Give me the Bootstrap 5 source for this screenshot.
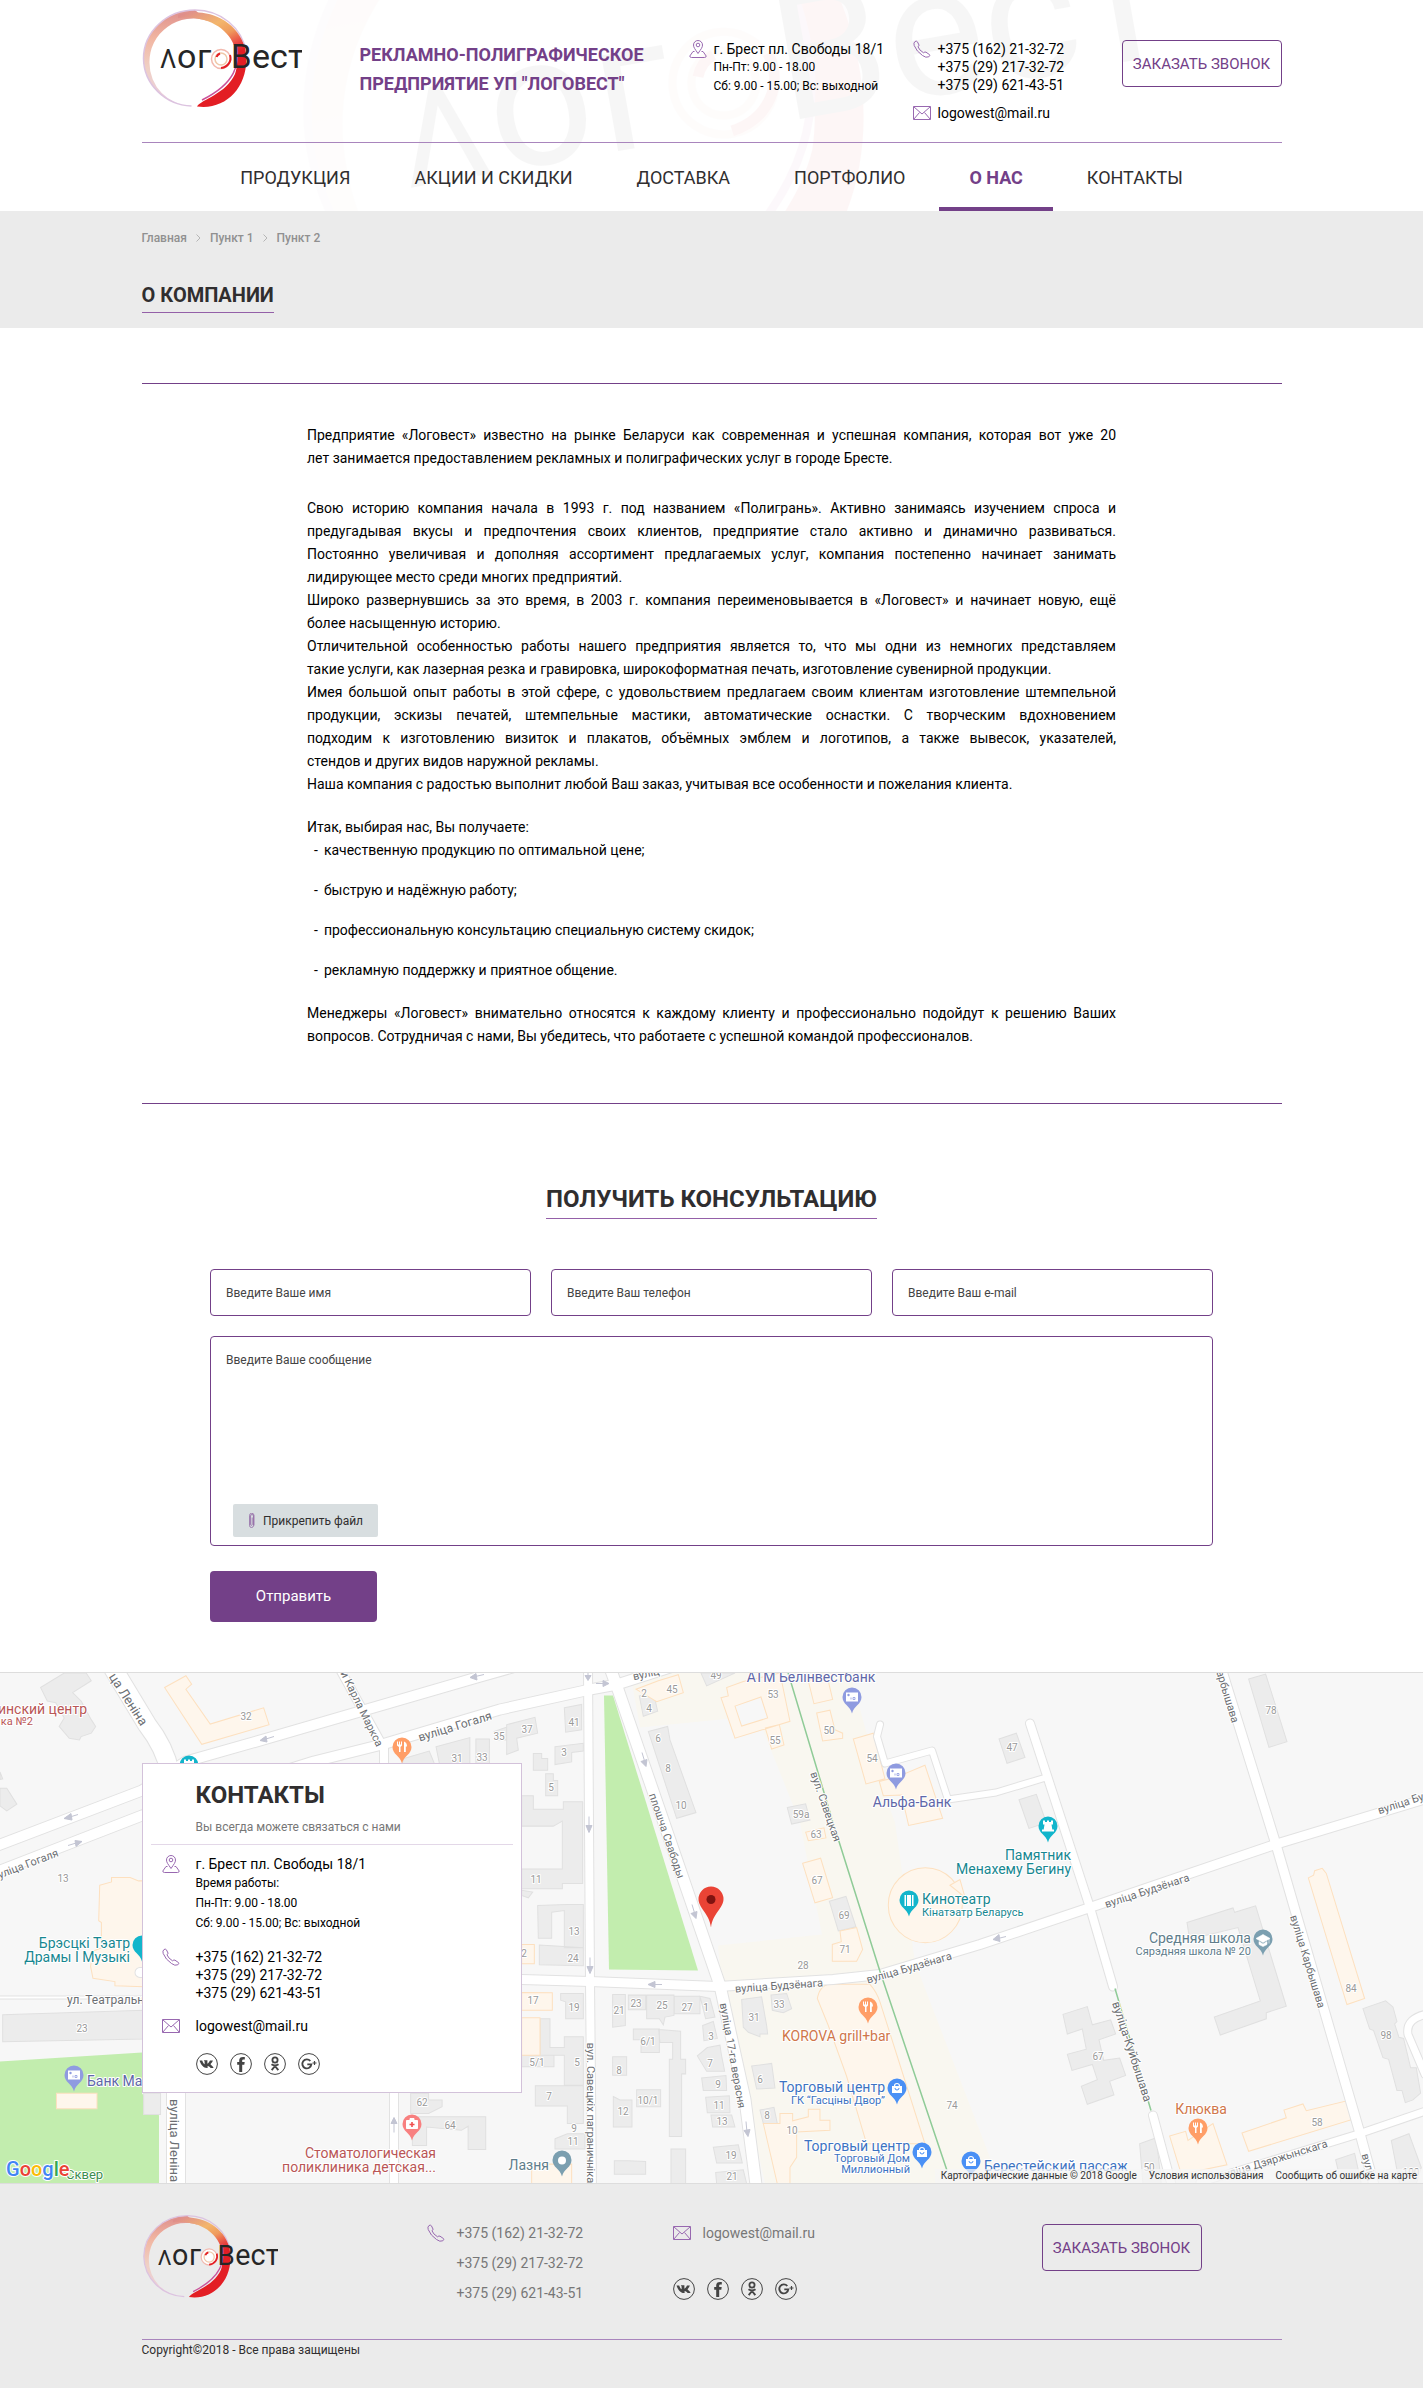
<!DOCTYPE html>
<html lang="ru">
<head>
<meta charset="utf-8">
<meta name="viewport" content="width=device-width, initial-scale=1">
<title>О компании - Логовест</title>
<link href="https://cdn.jsdelivr.net/npm/bootstrap@5.3.0/dist/css/bootstrap.min.css" rel="stylesheet">
<style>
:root{--brand:#734088;--brand-soft:#a985bd;--ink:#302e2f}
body{font-family:Roboto,"Liberation Sans",sans-serif;font-size:14px;line-height:18px;color:#000;background:#fff}
a{color:inherit;text-decoration:none}
.wrap{max-width:1170px;margin:0 auto;padding:0 15px}
.site-header{position:relative;overflow:hidden}
.watermark{position:absolute;inset:0;width:100%;height:100%;opacity:.035;pointer-events:none}
.header-top{border-bottom:1px solid var(--brand-soft);min-height:143px}
.col-brand{flex:0 0 218px;padding-top:8px}
.col-title{flex:0 0 329px;padding-top:40px;font-size:18px;line-height:29px;font-weight:700;color:var(--brand)}
.col-address{flex:0 0 224px;padding-top:40px}
.col-phones{flex:1 1 200px;padding-top:40px}
.icon-cell{flex:0 0 25px}
.icon-cell svg{display:block;width:18px;height:18px;fill:none;stroke:#9868b0;stroke-width:1}
.hours{font-size:12px;line-height:19px}
.phones-row{margin-bottom:10px}
.btn-call{width:160px;height:47px;padding:0;border:1px solid var(--brand);border-radius:4px;background:transparent;color:var(--brand);font-size:15px;line-height:20px}
.btn-call:hover{background:var(--brand);color:#fff}
.header-button{padding-top:40px}
.main-menu{gap:4px}
.main-menu a{display:block;padding:21px 30px 15px;line-height:28px;font-size:18px;color:var(--ink);border-bottom:4px solid transparent}
.main-menu a.current{font-weight:700;color:var(--brand);border-color:var(--brand)}
.page-head{background:#ebebeb;padding:18px 0 15px}
.crumbs{font-size:12px;line-height:18px;font-weight:500;color:#909090;margin-bottom:34px;gap:9px}
.crumbs svg{width:5px;height:8px;fill:none;stroke:#b5b5b5}
.page-title{font-size:20px;line-height:28px;font-weight:700;color:var(--ink);display:inline-block;padding-bottom:3px;border-bottom:1px solid #9460a8;margin:0;vertical-align:top}
.about{margin-top:55px;border-top:1px solid var(--brand);border-bottom:1px solid var(--brand);padding:40px 0 55px}
.about-text{max-width:809px;margin:0 auto;line-height:23px;text-align:justify}
.about-text p{margin:0}
.about-text .intro{margin-bottom:27px}
.about-text .offer{margin-top:20px}
.about-text ul{margin:0 0 20px;padding-left:7px}
.about-text li{display:flex;gap:6px}
.about-text li+li{margin-top:17px}
@media (min-width:992px){.about-text .row-full{display:block;text-align-last:justify}}
.form-title{font-size:24px;line-height:34px;font-weight:700;color:var(--ink);display:inline-block;padding-bottom:2px;border-bottom:1px solid #9460a8;margin:78px 0 50px;vertical-align:top}
.ask-form{max-width:1003px;margin:0 auto 50px}
.ask-fields{display:grid;grid-template-columns:repeat(3,1fr);gap:20px}
.ask-form .form-control{border:1px solid var(--brand);border-radius:4px;height:47px;padding:0 15px;font-size:12px;line-height:18px;color:#333}
.ask-form .form-control::placeholder{color:#444;opacity:1}
.ask-form textarea.form-control{height:210px;padding:14px 15px;resize:none;display:block}
.message-box{position:relative;margin-top:20px}
.attach{position:absolute;left:23px;bottom:9px;height:33px;padding:0 15px;background:#d8dee0;border-radius:2px;font-size:12px;color:var(--ink);cursor:pointer;gap:8px}
.attach svg{width:7px;height:16px;fill:none;stroke:#8a5a9e;stroke-width:.7}
.btn-send{width:167px;height:51px;margin-top:25px;background:var(--brand);color:#fff;border:0;border-radius:4px;font-size:15px}
.btn-send:hover{background:#5f3372;color:#fff}
.map-section{position:relative;height:512px;overflow:hidden;border-top:1px solid #ddd;border-bottom:1px solid #ddd;background:#f7f7f7}
.map-canvas{position:absolute;inset:0;width:100%;height:100%;display:block}
.map-overlay{position:relative;padding-top:90px}
.contact-box{width:380px;max-width:100%;background:#fff;border:1px solid #d3c2da;padding:14px 8px 17px}
.contact-box h2{font-size:24px;line-height:34px;font-weight:700;color:var(--ink);margin:0 0 6px 45px}
.contact-box .sub{font-size:12px;line-height:18px;color:#777;margin:0 0 8px 45px}
.contact-box hr{margin:0 0 10px;border-top:1px solid #e3d8e8;opacity:1}
.contact-box .line{padding-left:11px;margin-bottom:15px}
.contact-box .line:last-child{margin-bottom:0;padding-top:3px}
.contact-box .icon-cell{flex-basis:34px}
.contact-box .hours{line-height:20px}
.socials{gap:12px}
.socials svg{display:block;width:22px;height:22px;fill:none;stroke:#444}
.site-footer{background:#ebebeb;padding-top:30px;color:#777}
.footer-top{min-height:126px;border-bottom:1px solid var(--brand-soft)}
.f-brand{flex:0 0 285px}
.f-phones{flex:0 0 246px;padding-top:10px}
.f-mail{flex:0 0 369px;padding-top:10px}
.f-phones .icon-cell,.f-mail .icon-cell{flex-basis:30px}
.f-phones a{display:block;margin-bottom:12px}
.f-call{padding-top:10px}
.copyright{font-size:12px;line-height:20px;color:var(--ink);padding-bottom:28px}
.m-bld{fill:#ececec;stroke:#e0e0e0;stroke-width:3}
.m-shop{fill:#fef6ec;stroke:#fde0bf;stroke-width:3}
.m-edge path{fill:none;stroke:#e2e2e2;stroke-linejoin:round;stroke-linecap:round}
.m-road path{fill:none;stroke:#fff;stroke-linejoin:round;stroke-linecap:round}
.map-canvas text{font-family:Roboto,"Liberation Sans",sans-serif;paint-order:stroke;stroke:#fff;stroke-width:2px;stroke-linejoin:round}
.t-num{font-size:10px;fill:#999}
.t-st{font-size:11px;fill:#6b6e72}
.t-poi{font-size:14px}
.t-small{font-size:11px}
.map-legal{position:absolute;right:0;bottom:0;background:rgba(245,245,245,.75);font-size:10px;line-height:14px;color:#333;padding:0 6px;gap:12px}
</style>
</head>
<body>
<svg width="0" height="0" class="position-absolute" aria-hidden="true">
  <defs>
    <linearGradient id="ring" x1="0" y1="0" x2="0" y2="1"><stop offset="0" stop-color="#de8f8c"/><stop offset=".3" stop-color="#f1b6a2"/><stop offset=".6" stop-color="#f0d0c4"/><stop offset="1" stop-color="#e8cfe2"/></linearGradient>
    <linearGradient id="swoosh" x1="0" y1="0" x2=".35" y2="1"><stop offset="0" stop-color="#dc8790"/><stop offset=".28" stop-color="#f3b66c"/><stop offset=".42" stop-color="#ef9a5c"/><stop offset=".55" stop-color="#ea4b45"/><stop offset=".65" stop-color="#e31e24"/><stop offset="1" stop-color="#e31e24"/></linearGradient>
    <symbol id="logo" viewBox="0 0 160 102" overflow="visible">
      <path d="M49.500 98A50 48 0 0 1 1.500 50.500A51.500 48.500 0 0 1 53 2L66 13A44 43 0 0 0 7.500 55A43 43 0 0 0 49.500 98Z" fill="url(#ring)"/>
      <path d="M49.500 98A50 48 0 0 1 1.500 50.500A51.500 48.500 0 0 1 53 2A51.500 48.500 0 0 1 104 44" fill="none" stroke="#dcc3e0" stroke-width="1.500"/>
      <path d="M36 7C58 -1 94 8 103 40C110 75 86 103 55 98.500C60 91 84 86 93 66C100 45 90 20 62 12C52 9 44 9 36 10Z" fill="url(#swoosh)"/>
      <path d="M94.500 36C98 56 94 75 60 92" fill="none" stroke="#c9529a" stroke-width="1.500"/>
      <circle cx="79" cy="51" r="9.500" fill="#fff" stroke="#f2b9ae" stroke-width="1.500"/>
      <circle cx="79" cy="51" r="6" fill="#fff" stroke="#f0c8a8" stroke-width="1.500"/>
      <path d="M74.500 49A6 6 0 0 1 78 45.500M88 47C90 53 86 59 79 60" fill="none" stroke="#e31e24" stroke-width="2"/>
      <g fill="#262626" font-family="Roboto,'Liberation Sans',sans-serif" font-weight="400"><text x="18" y="60" font-size="25">Λ</text><text x="35 55" y="60" font-size="34">ог</text><text x="89" y="60" font-size="33">В</text><text x="110 128 146" y="60" font-size="34">ест</text></g>
    </symbol>
    <symbol id="i-pin" viewBox="0 0 18 18"><path d="M9 13.500C6 9 4.500 7.500 4.500 5A4.500 4.500 0 0 1 13.500 5C13.500 7.500 12 9 9 13.500Z"/><circle cx="9" cy="5" r="1.800"/><path d="M5.500 11.500L4 11.500L.8 16Q.8 17.500 2.500 17.500H15.500Q17.200 17.500 17.200 16L14 11.500H12.500"/></symbol>
    <symbol id="i-phone" viewBox="0 0 18 18"><path d="M2 1.500Q3.500 .6 4.400 1.800L6 5Q6.200 6 5 6.800Q6 10 10.500 12.800Q12 11.500 13 12.200L16.500 14.600Q17.300 15.600 15.800 16.800Q13 18.200 9.500 15.500Q3.500 11.500 1.200 5.500Q.3 2.800 2 1.500Z"/></symbol>
    <symbol id="i-mail" viewBox="0 0 18 18"><path d="M.5 2.500H17.500V15.500H.5ZM.8 2.800L9 10L17.200 2.800M.8 15.200L6.500 8.500M17.200 15.200L11.500 8.500"/></symbol>
    <symbol id="s-vk" viewBox="0 0 22 22"><circle cx="11" cy="11" r="10.400"/><path fill="#444" stroke="none" d="M3.500 7.500H6.200C7.200 10 8 11.300 8.600 11.300V8.500L7.800 7.200H11.400V10.700C12.300 10.400 13.200 9 14 7.500H16.900C16.400 9.200 14.900 10.600 14.500 11.200C15 11.900 17 13.300 17.600 15H14.600C13.900 14 13 13 11.600 12.900V15C7.500 15.300 5 12 3.500 7.500Z"/></symbol>
    <symbol id="s-fb" viewBox="0 0 22 22"><circle cx="11" cy="11" r="10.400"/><path fill="#444" stroke="none" d="M9.200 19V11.800H7.200V9H9.200V7.300C9.200 4.500 11 3.500 14.800 4V6.600C13 6.500 12.200 6.500 12.200 7.600V9H14.700L14.300 11.800H12.200V19Z"/></symbol>
    <symbol id="s-ok" viewBox="0 0 22 22"><circle cx="11" cy="11" r="10.400"/><circle cx="11" cy="7" r="2.600" stroke-width="1.800"/><path stroke-width="1.900" d="M7.500 11.300Q11 13.700 14.500 11.300M11 13L7.700 17.200M11 13L14.300 17.200"/></symbol>
    <symbol id="s-gp" viewBox="0 0 22 22"><circle cx="11" cy="11" r="10.400"/><path stroke-width="1.900" d="M12.300 8A4.500 4.500 0 1 0 13.300 11.400H9.300"/><path stroke-width="1.200" d="M16.500 8V12M14.500 10H18.500"/></symbol>
    <path id="drop" d="M0 0C-2 -8 -9.500 -9 -9.500 -16.500A9.500 9.500 0 1 1 9.500 -16.500C9.500 -9 2 -8 0 0Z"/>
    <g id="p-food" fill="#fff"><path d="M-5 -22h1v3h1v-3h1v3h1v-3h1v4l-1.500 1.500v5h-1.500v-5L-5 -18ZM2 -22q3 1 3 5h-1.200v5.500H2Z"/></g>
    <g id="p-atm"><rect x="-6" y="-21" width="12" height="9" fill="#fff"/><circle cx="-3.500" cy="-18.500" r="1.200" fill="#8f9be0"/><path d="M-1 -16v2M1 -16h2v2h-2z" stroke="#8f9be0" stroke-width=".8" fill="none"/></g>
    <g id="p-bag"><path d="M-5 -18.500H5V-11.500H-5Z" fill="#fff"/><path d="M-2.500 -18.500a2.500 2.500 0 0 1 5 0" fill="none" stroke="#fff" stroke-width="1.200"/><path d="M-2 -16.500a2 2 0 0 0 4 0" fill="none" stroke="#4a90f5"/></g>
    <g id="p-rook" fill="#fff"><path d="M-5 -22h2v1.500h2v-1.500h2v1.500h2v-1.500h2v4h-1.500l.8 5h1.700v2h-12v-2h1.700l.8 -5h-1.500Z"/></g>
  </defs>
</svg>

<header class="site-header">
  <svg class="watermark" viewBox="0 0 1423 211" preserveAspectRatio="xMidYMin slice" aria-hidden="true"><g transform="translate(543 115) rotate(-10) scale(5.4) translate(-187 -51)"><use href="#logo" x="142" y="0" width="160" height="102"/></g></svg>
  <div class="wrap position-relative">
    <div class="header-top d-flex flex-wrap flex-xl-nowrap">
      <div class="col-brand"><a href="#" aria-label="Логовест"><svg width="160" height="102"><use href="#logo"/></svg></a></div>
      <div class="col-title">РЕКЛАМНО-ПОЛИГРАФИЧЕСКОЕ<br>ПРЕДПРИЯТИЕ УП "ЛОГОВЕСТ"</div>
      <div class="col-address d-flex">
        <div class="icon-cell"><svg><use href="#i-pin"/></svg></div>
        <div>г. Брест пл. Свободы 18/1<div class="hours">Пн-Пт: 9.00 - 18.00<br>Сб: 9.00 - 15.00; Вс: выходной</div></div>
      </div>
      <div class="col-phones">
        <div class="phones-row d-flex"><div class="icon-cell"><svg><use href="#i-phone"/></svg></div><div><a href="tel:+375162213272">+375 (162) 21-32-72</a><br><a href="tel:+375292173272">+375 (29) 217-32-72</a><br><a href="tel:+375296214351">+375 (29) 621-43-51</a></div></div>
        <div class="d-flex"><div class="icon-cell"><svg><use href="#i-mail"/></svg></div><a href="mailto:logowest@mail.ru">logowest@mail.ru</a></div>
      </div>
      <div class="header-button"><button type="button" class="btn btn-call">ЗАКАЗАТЬ ЗВОНОК</button></div>
    </div>
    <nav class="main-menu d-flex flex-wrap justify-content-center">
      <a href="#">ПРОДУКЦИЯ</a><a href="#">АКЦИИ И СКИДКИ</a><a href="#">ДОСТАВКА</a><a href="#">ПОРТФОЛИО</a><a href="#" class="current" aria-current="page">О НАС</a><a href="#">КОНТАКТЫ</a>
    </nav>
  </div>
</header>

<section class="page-head">
  <div class="wrap">
    <nav class="crumbs d-flex align-items-center"><a href="#">Главная</a><svg viewBox="0 0 5 8"><path d="M.5 .5L4 4L.5 7.500"/></svg><a href="#">Пункт 1</a><svg viewBox="0 0 5 8"><path d="M.5 .5L4 4L.5 7.500"/></svg><span>Пункт 2</span></nav>
    <h1 class="page-title">О КОМПАНИИ</h1>
  </div>
</section>

<main class="wrap">
  <section class="about">
    <div class="about-text">
      <p class="intro"><span class="row-full">Предприятие «Логовест» известно на рынке Беларуси как современная и успешная компания, которая вот уже 20</span> лет занимается предоставлением рекламных и полиграфических услуг в городе Бресте.</p>
      <p><span class="row-full">Свою историю компания начала в 1993 г. под названием «Полигрань». Активно занимаясь изучением спроса и</span> <span class="row-full">предугадывая вкусы и предпочтения своих клиентов, предприятие стало активно и динамично развиваться.</span> <span class="row-full">Постоянно увеличивая и дополняя ассортимент предлагаемых услуг, компания постепенно начинает занимать</span> лидирующее место среди многих предприятий.</p>
      <p><span class="row-full">Широко развернувшись за это время, в 2003 г. компания переименовывается в «Логовест» и начинает новую, ещё</span> более насыщенную историю.</p>
      <p><span class="row-full">Отличительной особенностью работы нашего предприятия является то, что мы одни из немногих представляем</span> такие услуги, как лазерная резка и гравировка, широкоформатная печать, изготовление сувенирной продукции.</p>
      <p><span class="row-full">Имея большой опыт работы в этой сфере, с удовольствием предлагаем своим клиентам изготовление штемпельной</span> <span class="row-full">продукции, эскизы печатей, штемпельные мастики, автоматические оснастки. С творческим вдохновением</span> <span class="row-full">подходим к изготовлению визиток и плакатов, объёмных эмблем и логотипов, а также вывесок, указателей,</span> стендов и других видов наружной рекламы.</p>
      <p>Наша компания с радостью выполнит любой Ваш заказ, учитывая все особенности и пожелания клиента.</p>
      <p class="offer">Итак, выбирая нас, Вы получаете:</p>
      <ul class="list-unstyled">
        <li><span>-</span><span>качественную продукцию по оптимальной цене;</span></li>
        <li><span>-</span><span>быструю и надёжную работу;</span></li>
        <li><span>-</span><span>профессиональную консультацию специальную систему скидок;</span></li>
        <li><span>-</span><span>рекламную поддержку и приятное общение.</span></li>
      </ul>
      <p><span class="row-full">Менеджеры «Логовест» внимательно относятся к каждому клиенту и профессионально подойдут к решению Ваших</span> вопросов. Сотрудничая с нами, Вы убедитесь, что работаете с успешной командой профессионалов.</p>
    </div>
  </section>
  <div class="text-center"><h2 class="form-title">ПОЛУЧИТЬ КОНСУЛЬТАЦИЮ</h2></div>
  <form class="ask-form">
    <div class="ask-fields">
      <input class="form-control" type="text" aria-label="Имя" placeholder="Введите Ваше имя">
      <input class="form-control" type="tel" aria-label="Телефон" placeholder="Введите Ваш телефон">
      <input class="form-control" type="email" aria-label="E-mail" placeholder="Введите Ваш e-mail">
    </div>
    <div class="message-box">
      <textarea class="form-control" aria-label="Сообщение" placeholder="Введите Ваше сообщение"></textarea>
      <label class="attach d-flex align-items-center" for="file"><svg viewBox="0 0 7 16"><path d="M1.500 4V12.500A2 2 0 0 0 5.500 12.500V3A1.500 1.500 0 0 0 2.500 3V11.500A.8 .8 0 0 0 4.200 11.500V4.500M1.500 4V2.500A2 2 0 0 1 6 2.500V12.500"/></svg>Прикрепить файл</label>
      <input class="visually-hidden" type="file" id="file">
    </div>
    <button type="submit" class="btn btn-send">Отправить</button>
  </form>
</main>

<section class="map-section">
  <svg class="map-canvas" viewBox="0 0 1423 511" preserveAspectRatio="xMidYMid slice" role="img" aria-label="Карта">
    <rect width="1423" height="511" fill="#f7f7f7"/>
    <path d="M630 0H850L880 110L895 150L915 290L1000 511H765L722 318L718 273L822 262L800 150L760 50L740 45L640 55Z" fill="#f9f7f0"/>
    <path d="M604 23H613L698 298L609 297Z" fill="#c2edae"/>
    <path d="M0 389L142 380V421L159 443V511H0Z" fill="#c2edae"/>
    <g transform="translate(0 -12) scale(.338)">
      <path class="m-bld" d="M120 80L190 37H255L270 60L215 95L240 120L270 175L283 195L270 215L240 225L235 235L205 230L175 195L190 170L165 125L140 120ZM0 330L8 350L0 352ZM0 378L20 378L50 425L20 445L0 430ZM8 1048L425 1035V1120L8 1128ZM425 1280H475V1343H425ZM1195 290L1270 268L1285 305H1190ZM1290 255L1390 228V305H1300ZM1408 232H1448V305H1408ZM1462 210L1505 195V235H1465ZM1215 1280H1268V1300H1308V1320L1268 1340H1215ZM1220 1350H1437V1447H1385V1378L1365 1390L1262 1380V1435H1220Z"/>
      <path class="m-shop" d="M487 80L550 45L567 70L550 85L622 188L780 140L796 190L597 248ZM295 665L330 655V642H385L410 652H425V965L340 962V950L275 940L268 905L275 860L300 850V775L292 770ZM167 1280H287V1326H167Z"/>
    </g>
    <g transform="translate(500 -12) scale(.3333 .338)">
      <path class="m-bld" d="M193 140L245 130V205L197 212ZM20 190L105 168L113 215L50 230L55 265L20 278ZM165 255L250 245V268L215 272V300L165 308ZM100 275H125V290H143V325H100ZM137 335H160V355H173V400H137ZM65 400H100V440H190V418H248V660H187V675H65V617H187V475L160 490H65ZM65 680L98 685L85 702L65 695ZM113 725L200 722H250V850H193V740L155 745V822H115ZM118 842L250 850V903L118 900ZM182 985L250 985V1060H197V1010L182 1005ZM120 1060H150V1145H193V1113H250V1257H193V1168H120ZM65 1168H162V1202H65ZM106 1258H250V1370H202V1318H106ZM165 1415L202 1400H255V1445H165ZM338 988H376V1080L338 1085ZM385 990H437V1033H385ZM440 990H522V1050L495 1055L490 1078L478 1060H440ZM523 993H600V1045H523ZM600 993L630 1000L645 1055L617 1060ZM400 1090H478V1160H423V1122H400ZM476 1092L542 1097V1180H557V1223H545V1408H508V1223V1180H518V1130H480ZM338 1172H380V1227H338ZM410 1270H482V1320H410ZM340 1290L360 1300H396V1380H340ZM343 1480H385L437 1482V1520H343ZM513 1445H557V1548H513ZM608 1080L640 1068L652 1118L612 1125ZM622 1145L660 1138L664 1165L674 1215L620 1215L592 1170ZM605 1235L678 1228L680 1272H610ZM617 1292L688 1288L690 1338H622ZM633 1345H695L705 1380H638ZM640 1440L715 1433L727 1487H650ZM647 1515L730 1507L740 1548H650ZM725 1003L785 995L800 1080L803 1105H780V1113L745 1100L730 1085ZM813 990L860 985L875 1030L850 1042L817 1035ZM755 1200L815 1192L825 1265L770 1268ZM780 1330L822 1322L832 1370H790ZM418 105L460 95L473 150L430 165ZM445 210L503 195L510 235L588 450L530 467ZM603 37H705L620 75ZM862 435L917 424L930 472L875 484ZM988 712L1038 698L1068 788L1015 800Z"/>
      <path class="m-shop" d="M408 85L475 60L535 42L550 95L470 122ZM663 110L685 105L680 80L730 62L840 37L870 180L705 230ZM796 200L838 190L852 250L815 262ZM925 60L980 40L998 115L942 128ZM950 155L990 147L1005 205L1028 215V230L968 238ZM1060 232L1120 215L1155 350L1098 365ZM1138 358L1190 345L1275 310L1328 467L1226 488L1205 398L1150 400ZM917 508L972 495L978 525L925 533ZM908 600L962 585L998 702L945 717ZM1020 800L1070 790L1088 855L1070 890H997V840L1024 832ZM65 840H103V897H65ZM65 982L157 983V1035H65ZM65 1057H120V1168H65ZM95 1490H215V1548H95ZM952 1000Q960 960 990 958H1110Q1130 980 1140 1010L1198 1190L1275 1430H1100L1040 1230L985 1080ZM790 1370L840 1370V1340H878V1362L925 1350V1328H960V1360H990V1390L890 1395V1470L870 1500V1548H832Z"/>
      <path d="M705 135L783 108L803 170L725 194Z" fill="#f7f7f7" stroke="#fde0bf" stroke-width="3"/>
      <circle class="m-shop" cx="1276" cy="724" r="111"/>
      <path class="m-shop" d="M1350 665L1380 648L1395 700Z"/>
    </g>
    <g transform="translate(943 -12) scale(.3333 .338)">
      <path class="m-bld" d="M168 232L220 215L246 287L192 304ZM228 412L280 396L310 480L258 497ZM917 55L968 40L1032 240L978 257ZM732 775L870 732L875 745L938 726L1030 1023L970 1042V1060L832 1108L814 1055L952 1007L885 790L740 825ZM360 1047L433 1024L448 1078L503 1063L518 1105L468 1122L482 1183L530 1176L548 1228L500 1245L513 1285L433 1313L415 1260L463 1240L448 1195L387 1213L373 1165L430 1150L418 1090L373 1105ZM1260 1030L1328 1007L1350 1025L1362 1068L1355 1075L1368 1115L1382 1118L1403 1205H1420L1433 1280L1410 1300L1387 1308L1377 1272H1362L1337 1180L1320 1175L1292 1095L1280 1090ZM590 1430L640 1412L655 1548H600ZM1178 1477L1235 1458L1255 1548H1195ZM1345 1420L1398 1400L1435 1500L1420 1548H1370Z"/>
      <path class="m-shop" d="M1096 643L1112 635L1115 622L1138 615L1150 630L1265 1000L1212 1018ZM897 1398L1030 1353L1023 1330L1080 1312L1090 1332L1215 1302L1228 1358L917 1452ZM680 1407L728 1393L735 1420L810 1370L852 1492L715 1520Z"/>
    </g>
    <g class="m-edge">
      <path stroke-width="20" d="M112 -6L147 52Q165 75 170 100L176 421V520"/>
      <path stroke-width="12" d="M-5 174L142 118L186 89L267 66L477 5L530 -10"/>
      <path stroke-width="12" d="M-5 200L142 143L314 89L382 72L500 37L590 17L617 12L670 -5"/>
      <path stroke-width="10" d="M339 -5L384 76V100L394 421V520"/>
      <path stroke-width="10" d="M588 -5L590 309L592 520"/>
      <path stroke-width="13" d="M608 -10L618 17L720 313L745 427L757 520"/>
      <path stroke-width="11" d="M140 300L522 307L590 309L718 314L833 307L880 302L980 272L1090 235L1275 172L1430 125"/>
      <path stroke-width="11" d="M1220 -8L1276 172L1360 461L1376 520"/>
      <path stroke-width="10" d="M1030 51L1090 235L1113 314M1153 443L1175 525"/>
      <path stroke-width="8" d="M880 52L877 64L885 91L932 78L948 127L996 120L1046 105"/>
      <path stroke-width="9" d="M1200 510L1360 461L1430 437M1430 341Q1405 345 1408 362L1425 402"/>
      <path stroke-width="4" d="M0 325H142"/>
    </g>
    <g class="m-road">
      <path stroke-width="18" d="M112 -6L147 52Q165 75 170 100L176 421V520"/>
      <path stroke-width="10" d="M-5 174L142 118L186 89L267 66L477 5L530 -10"/>
      <path stroke-width="10" d="M-5 200L142 143L314 89L382 72L500 37L590 17L617 12L670 -5"/>
      <path stroke-width="8" d="M339 -5L384 76V100L394 421V520"/>
      <path stroke-width="8" d="M588 -5L590 309L592 520"/>
      <path stroke-width="11" d="M608 -10L618 17L720 313L745 427L757 520"/>
      <path stroke-width="9" d="M140 300L522 307L590 309L718 314L833 307L880 302L980 272L1090 235L1275 172L1430 125"/>
      <path stroke-width="9" d="M1220 -8L1276 172L1360 461L1376 520"/>
      <path stroke-width="8" d="M1030 51L1090 235L1113 314M1153 443L1175 525"/>
      <path stroke-width="6" d="M880 52L877 64L885 91L932 78L948 127L996 120L1046 105"/>
      <path stroke-width="7" d="M1200 510L1360 461L1430 437M1430 341Q1405 345 1408 362L1425 402"/>
      <path stroke-width="2" d="M0 325H142"/>
    </g>
    <path d="M788 0L833 150L880 299L947 498M1115 316L1151 438" fill="none" stroke="#8fcb97" stroke-width="1.500"/>
    <g stroke="#c3c5d3" fill="#c3c5d3" stroke-width="1">
      <path d="M261 68L274 64M266 63.500L260 68L267 69.500ZM471 5L484 2M476 1L470 5L477 7.500ZM65 146L78 142M71 141L64 146L72 147.500ZM68 173L81 169M75 168L82 169L76 174ZM589 144V156M586 153H592L589 160ZM590 285V297M587 294H593L590 301ZM642 80L645 90M641 89L647 87L646 94ZM692 232L695 242M691 241L697 239L696 246ZM746 449L747 460M744 458L750 457L748 464ZM650 312H662M655 309L648 312L655 315ZM596 11H606M603 8L609 11L603 14ZM588 0V5M585 3H591L588 8ZM394 446V460M391 451H397L394 445ZM994 267L1006 264M999 262L993 267L1000 269Z"/>
    </g>
    <g class="t-num" text-anchor="middle">
      <text x="246" y="47">32</text><text x="457" y="89">31</text><text x="482" y="88">33</text><text x="499" y="67">35</text><text x="63" y="209">13</text><text x="82" y="359">23</text><text x="422" y="433">62</text><text x="450" y="456">64</text>
      <text x="527" y="60">37</text><text x="574" y="53">41</text><text x="564" y="83">3</text><text x="551" y="118">5</text><text x="536" y="210">11</text><text x="574" y="262">13</text><text x="573" y="289">24</text><text x="524" y="284">2</text><text x="533" y="331">17</text><text x="574" y="338">19</text><text x="537" y="393">5/1</text><text x="577" y="393">5</text><text x="549" y="427">7</text><text x="574" y="459">9</text><text x="573" y="472">11</text>
      <text x="619" y="341">21</text><text x="636" y="334">23</text><text x="662" y="336">25</text><text x="687" y="338">27</text><text x="706" y="338">1</text><text x="648" y="372">6/1</text><text x="711" y="367">3</text><text x="710" y="394">7</text><text x="619" y="401">8</text><text x="718" y="415">9</text><text x="648" y="431">10/1</text><text x="719" y="436">11</text><text x="623" y="442">12</text><text x="722" y="452">13</text><text x="731" y="486">19</text><text x="732" y="507">21</text>
      <text x="644" y="24">2</text><text x="649" y="39">4</text><text x="672" y="20">45</text><text x="716" y="6">49</text><text x="658" y="69">6</text><text x="668" y="99">8</text><text x="681" y="136">10</text><text x="773" y="25">53</text><text x="775" y="71">55</text><text x="829" y="61">50</text><text x="872" y="89">54</text><text x="801" y="145">59а</text><text x="816" y="165">63</text><text x="817" y="211">67</text><text x="844" y="246">69</text><text x="845" y="280">71</text><text x="803" y="296">28</text><text x="779" y="335">33</text><text x="754" y="348">31</text><text x="760" y="410">6</text><text x="767" y="446">8</text><text x="792" y="461">10</text><text x="952" y="436">74</text>
      <text x="1012" y="78">47</text><text x="1271" y="41">78</text><text x="1098" y="387">67</text><text x="1351" y="319">84</text><text x="1386" y="366">98</text><text x="1317" y="453">58</text><text x="1149" y="498">50</text><text x="1411" y="503">100</text>
    </g>
    <g class="t-st" text-anchor="middle">
      <text transform="translate(128 27) rotate(57)" y="4" style="font-size:13px">ца Леніна</text>
      <text transform="translate(362 36) rotate(64)" y="4">и Карла Маркса</text>
      <text transform="translate(455 54) rotate(-17)" y="4" style="font-size:12px">вуліца Гогаля</text>
      <text transform="translate(28 191) rotate(-21)" y="4">уліца Гогаля</text>
      <text x="67" y="331" text-anchor="start" style="font-size:12px">ул. Театральн</text>
      <text transform="translate(174 468) rotate(90)" y="4" style="font-size:13px">вуліца Леніна</text>
      <text transform="translate(646 1) rotate(-12)" y="4">вуліц</text>
      <text transform="translate(667 163) rotate(71)" y="4">плошча Свабоды</text>
      <text transform="translate(826 134) rotate(71)" y="4">вул. Савецкая</text>
      <text transform="translate(779 313) rotate(-4)" y="4">вуліца Будзёнага</text>
      <text transform="translate(909 295) rotate(-16)" y="4">вуліца Будзёнага</text>
      <text transform="translate(733 383) rotate(80)" y="4">вуліца 17-га верасня</text>
      <text transform="translate(591 443) rotate(90)" y="4">вул. Савецкіх паграничнікаў</text>
      <text transform="translate(1147 218) rotate(-18)" y="4">вуліца Будзёнага</text>
      <text transform="translate(1378 138) rotate(-18)" y="4" text-anchor="start">вуліца Бу</text>
      <text transform="translate(1228 24) rotate(73)" y="4">арбышава</text>
      <text transform="translate(1308 289) rotate(73)" y="4">вуліца Карбышава</text>
      <text transform="translate(1132 379) rotate(72)" y="4" style="font-size:12px">вуліца-Куйбышава</text>
      <text transform="translate(1273 487) rotate(-17)" y="4">вуліца Дзяржынскага</text>
      <text transform="translate(1369 494) rotate(74)" y="4">вуліц</text>
    </g>
    <g fill="#8f9be0"><use href="#drop" x="852" y="41"/><use href="#drop" x="896" y="117"/><use href="#drop" x="74" y="419"/></g>
    <g fill="#ff9e67"><use href="#drop" x="868" y="351"/><use href="#drop" x="1198" y="472"/><use href="#drop" x="402" y="91"/></g>
    <g fill="#4a90f5"><use href="#drop" x="897" y="432"/><use href="#drop" x="922" y="496"/><use href="#drop" x="971" y="505"/></g>
    <g fill="#12b5cb"><use href="#drop" x="909" y="244"/><use href="#drop" x="1048" y="170"/><use href="#drop" x="189" y="109"/><use href="#drop" x="142" y="289"/></g>
    <g fill="#7b9fb0"><use href="#drop" x="562" y="504"/><use href="#drop" x="1263" y="283"/></g>
    <use href="#drop" x="412" y="468" fill="#f88080"/>
    <use href="#p-atm" x="852" y="41"/><use href="#p-atm" x="896" y="117"/><use href="#p-atm" x="74" y="419"/>
    <use href="#p-food" x="868" y="351"/><use href="#p-food" x="1198" y="472"/><use href="#p-food" x="402" y="91"/>
    <use href="#p-bag" x="897" y="432"/><use href="#p-bag" x="922" y="496"/><use href="#p-bag" x="971" y="505"/>
    <use href="#p-rook" x="1048" y="170"/><use href="#p-rook" x="189" y="109"/>
    <path d="M904 222H914V234H904ZM906.500 222V234M911.500 222V234" fill="#fff" stroke="#12b5cb"/>
    <circle cx="562" cy="488" r="4" fill="#fff"/>
    <path d="M1256 266L1263 262L1270 266L1263 270ZM1259 269L1263 271.500L1267 269V272L1263 274L1259 272ZM1269 266V271" fill="#fff" stroke="#fff" stroke-width=".6"/>
    <path d="M406.500 448H417.500V456H406.500ZM410 448V446H414V448" fill="#fff" stroke="#fff"/><path d="M412 449.500V454.500M409.500 452H414.500" stroke="#f05050" stroke-width="1.600"/>
    <path d="M711 255C709 240 698.500 236 698.500 226.500A12.500 12.500 0 1 1 723.500 226.500C723.500 236 713 240 711 255Z" fill="#ea4335"/><circle cx="711" cy="227" r="4.500" fill="#7f1310"/>
    <g class="t-poi" fill="#b95656"><text x="87" y="41" text-anchor="end">инский центр</text><text x="33" y="52" text-anchor="end" class="t-small">ка №2</text><text x="436" y="485" text-anchor="end">Стоматологическая</text><text x="436" y="499" text-anchor="end">поликлиника детская...</text></g>
    <g class="t-poi" fill="#6067a8"><text x="811" y="9" text-anchor="middle">АТМ Белінвестбанк</text><text x="912" y="134" text-anchor="middle">Альфа-Банк</text><text x="87" y="413">Банк Ма</text></g>
    <g class="t-poi" fill="#d0764a"><text x="782" y="368">KOROVA grill+bar</text><text x="1201" y="441" text-anchor="middle">Клюква</text></g>
    <g class="t-poi" fill="#3d73c2"><text x="885" y="419" text-anchor="end">Торговый центр</text><text x="885" y="431" text-anchor="end" class="t-small">ГК “Гасціны Двор”</text><text x="910" y="478" text-anchor="end">Торговый центр</text><text x="910" y="489" text-anchor="end" class="t-small">Торговый Дом</text><text x="910" y="500" text-anchor="end" class="t-small">Миллионный</text><text x="984" y="498">Берестейский пассаж</text></g>
    <g class="t-poi" fill="#178791"><text x="922" y="231">Кинотеатр</text><text x="922" y="243" class="t-small">Кінатэатр Беларусь</text><text x="1071" y="187" text-anchor="end">Памятник</text><text x="1071" y="201" text-anchor="end">Менахему Бегину</text><text x="130" y="275" text-anchor="end">Брэсцкі Тэатр</text><text x="130" y="289" text-anchor="end">Драмы І Музыкі</text></g>
    <g class="t-poi" fill="#607d8b"><text x="1251" y="270" text-anchor="end">Средняя школа</text><text x="1251" y="282" text-anchor="end" class="t-small">Сярэдняя школа № 20</text><text x="549" y="497" text-anchor="end">Лазня</text></g>
    <text x="66" y="506" class="t-poi" style="font-size:13px" fill="#3c8d50">Сквер</text>
    <text x="6" y="503" font-weight="500" style="font-size:20px"><tspan fill="#4285f4">G</tspan><tspan fill="#ea4335">o</tspan><tspan fill="#fbbc05">o</tspan><tspan fill="#4285f4">g</tspan><tspan fill="#34a853">l</tspan><tspan fill="#ea4335">e</tspan></text>
  </svg>
  <div class="map-legal d-flex"><span>Картографические данные © 2018 Google</span><a href="#">Условия использования</a><a href="#">Сообщить об ошибке на карте</a></div>
  <div class="wrap map-overlay">
    <div class="contact-box">
      <h2>КОНТАКТЫ</h2>
      <p class="sub">Вы всегда можете связаться с нами</p>
      <hr>
      <div class="line d-flex"><div class="icon-cell"><svg><use href="#i-pin"/></svg></div><div>г. Брест пл. Свободы 18/1<div class="hours">Время работы:<br>Пн-Пт: 9.00 - 18.00<br>Сб: 9.00 - 15.00; Вс: выходной</div></div></div>
      <div class="line d-flex"><div class="icon-cell"><svg><use href="#i-phone"/></svg></div><div><a href="tel:+375162213272">+375 (162) 21-32-72</a><br><a href="tel:+375292173272">+375 (29) 217-32-72</a><br><a href="tel:+375296214351">+375 (29) 621-43-51</a></div></div>
      <div class="line d-flex"><div class="icon-cell"><svg><use href="#i-mail"/></svg></div><a href="mailto:logowest@mail.ru">logowest@mail.ru</a></div>
      <div class="line d-flex"><div class="icon-cell"></div><div class="socials d-flex"><a href="#" aria-label="ВКонтакте"><svg><use href="#s-vk"/></svg></a><a href="#" aria-label="Facebook"><svg><use href="#s-fb"/></svg></a><a href="#" aria-label="Одноклассники"><svg><use href="#s-ok"/></svg></a><a href="#" aria-label="Google+"><svg><use href="#s-gp"/></svg></a></div></div>
    </div>
  </div>
</section>

<footer class="site-footer">
  <div class="wrap">
    <div class="footer-top d-flex flex-wrap flex-xl-nowrap">
      <div class="f-brand"><a href="#" aria-label="Логовест"><svg width="136" height="86" viewBox="0 0 160 102"><use href="#logo" width="160" height="102"/></svg></a></div>
      <div class="f-phones d-flex"><div class="icon-cell"><svg><use href="#i-phone"/></svg></div><div><a href="tel:+375162213272">+375 (162) 21-32-72</a><a href="tel:+375292173272">+375 (29) 217-32-72</a><a href="tel:+375296214351">+375 (29) 621-43-51</a></div></div>
      <div class="f-mail"><div class="d-flex mb-4 pb-2"><div class="icon-cell"><svg><use href="#i-mail"/></svg></div><a href="mailto:logowest@mail.ru">logowest@mail.ru</a></div>
        <div class="socials d-flex pt-1"><a href="#" aria-label="ВКонтакте"><svg><use href="#s-vk"/></svg></a><a href="#" aria-label="Facebook"><svg><use href="#s-fb"/></svg></a><a href="#" aria-label="Одноклассники"><svg><use href="#s-ok"/></svg></a><a href="#" aria-label="Google+"><svg><use href="#s-gp"/></svg></a></div></div>
      <div class="f-call"><button type="button" class="btn btn-call">ЗАКАЗАТЬ ЗВОНОК</button></div>
    </div>
    <div class="copyright">Copyright©2018 - Все права защищены</div>
  </div>
</footer>
<script src="https://cdn.jsdelivr.net/npm/bootstrap@5.3.0/dist/js/bootstrap.bundle.min.js"></script>
</body>
</html>
